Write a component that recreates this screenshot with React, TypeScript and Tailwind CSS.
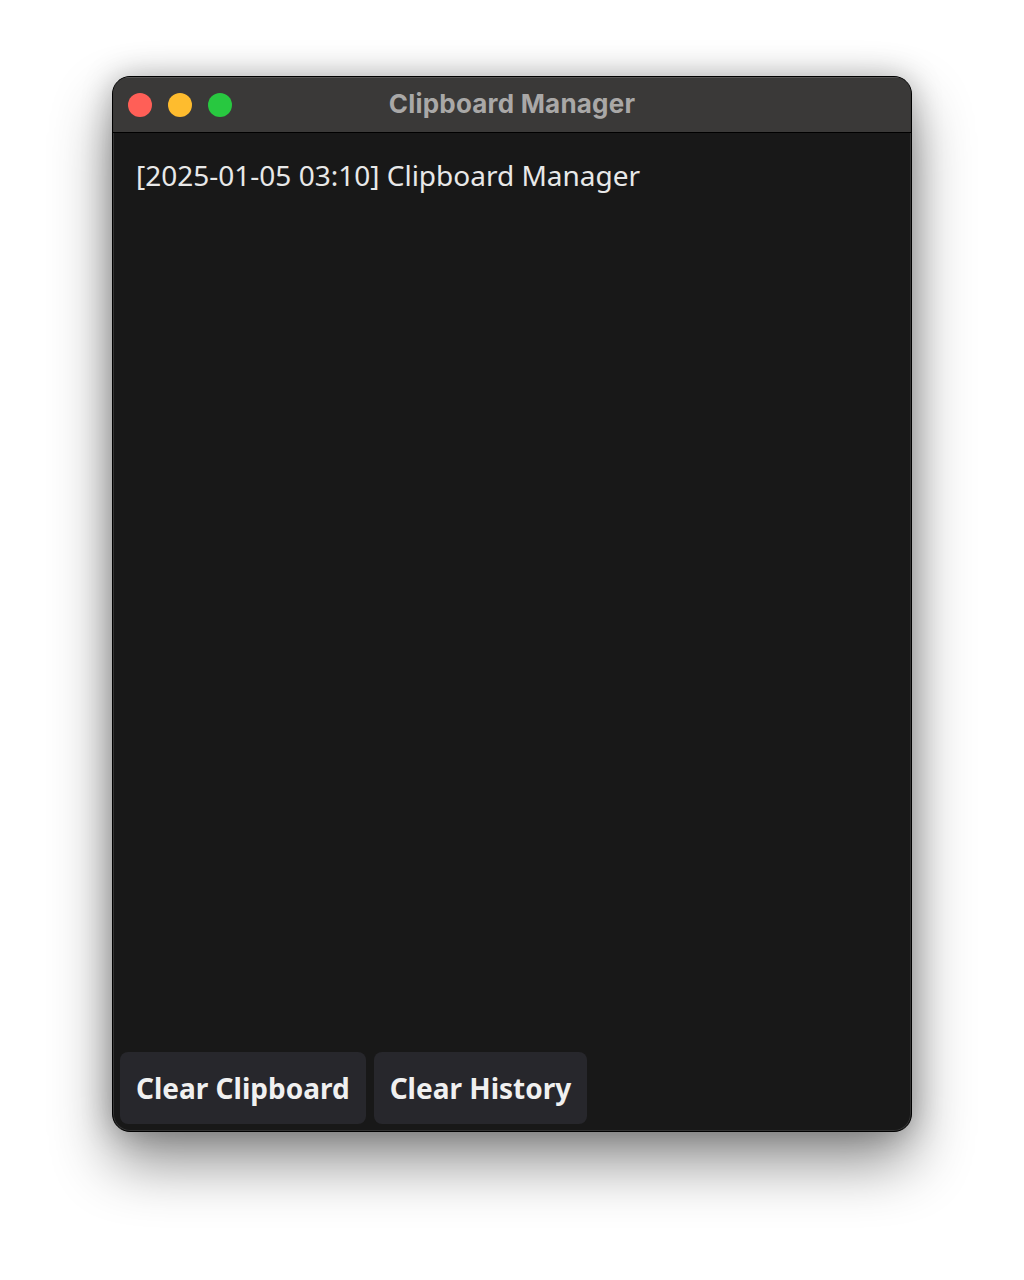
export default function App() {
  return (
    <div className="flex h-[1280px] w-[1024px] items-start justify-center bg-white pt-[76px]">
      <div className="flex h-[1056px] w-[800px] flex-col overflow-hidden rounded-[18px] border border-black bg-[#181818] shadow-[0_0_0_1px_rgba(255,255,255,0.12)_inset,0_30px_60px_rgba(0,0,0,0.45),0_0_30px_rgba(0,0,0,0.25)]">
        <div className="relative flex h-[56px] shrink-0 items-center border-b border-black bg-[#3a3938] px-[15px] shadow-[inset_0_1px_0_rgba(255,255,255,0.15)]">
          <div className="flex gap-[16px]">
            <span className="h-[24px] w-[24px] rounded-full bg-[#ff5f57]" />
            <span className="h-[24px] w-[24px] rounded-full bg-[#febc2e]" />
            <span className="h-[24px] w-[24px] rounded-full bg-[#28c840]" />
          </div>
          <div className="absolute inset-0 flex items-center justify-center pb-[2px] font-['Inter',sans-serif] text-[26px] font-bold tracking-[0.2px] text-[#a9a8a7]">
            Clipboard Manager
          </div>
        </div>
        <div className="flex flex-1 flex-col">
          <div className="flex-1 px-[23px] pt-[21px] font-['Noto_Sans',sans-serif] text-[28px] leading-[42px] text-[#e8e8e8]">
            [2025-01-05 03:10] Clipboard Manager
          </div>
          <div className="flex gap-[8px] px-[7px] pb-[7px]">
            <button className="h-[72px] rounded-[8px] bg-[#27272c] px-[16px] font-['Noto_Sans',sans-serif] text-[28px] font-bold text-[#f0f0f0]">
              Clear Clipboard
            </button>
            <button className="h-[72px] rounded-[8px] bg-[#27272c] px-[16px] font-['Noto_Sans',sans-serif] text-[28px] font-bold text-[#f0f0f0]">
              Clear History
            </button>
          </div>
        </div>
      </div>
    </div>
  );
}
